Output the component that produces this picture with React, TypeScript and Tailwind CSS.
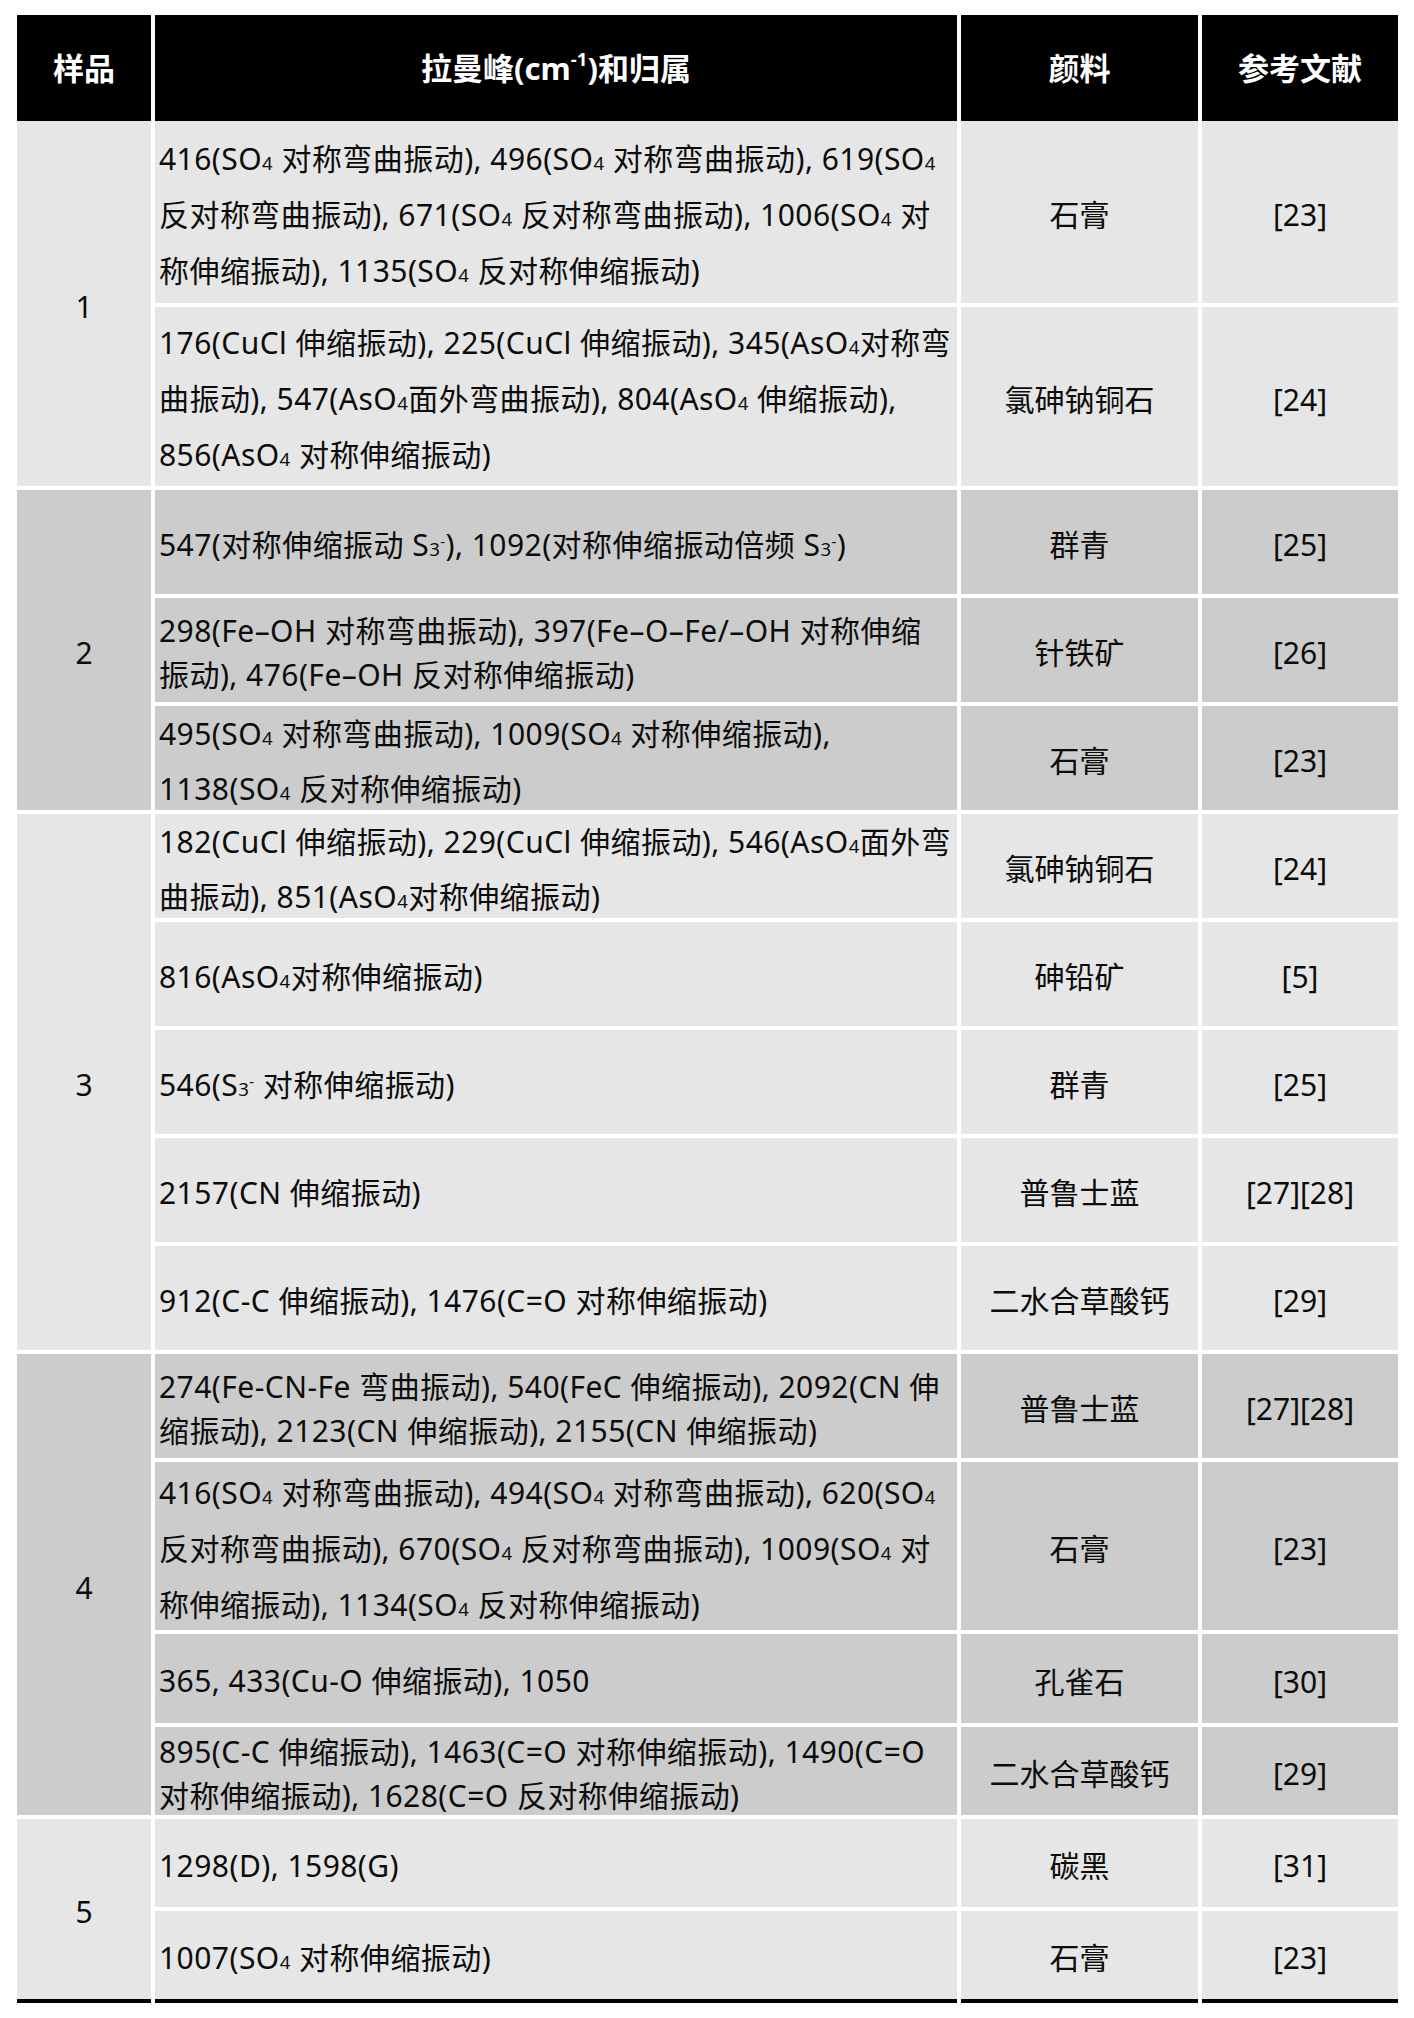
import React, { ReactNode } from "react";

const sub = (t: string) => <span className="text-[0.62em] leading-none">{t}</span>;
const SO4 = (
  <>
    SO{sub("4")}
  </>
);
const AsO4 = (
  <>
    AsO{sub("4")}
  </>
);
const S3 = (
  <>
    S{sub("3")}
    <span className="relative -top-[0.6em] text-[0.5em] leading-none">-</span>
  </>
);

type Row = { h: string; lh: string; lines: ReactNode[]; pig: string; ref: string };
type Group = { n: string; span: string; bg: string; rows: Row[] };

const LIGHT = "bg-[#e6e6e6]";
const DARK = "bg-[#cccccc]";

const groups: Group[] = [
  {
    n: "1",
    span: "row-span-2",
    bg: LIGHT,
    rows: [
      {
        h: "h-[182px]",
        lh: "leading-[56px]",
        lines: [
          <>416({SO4} 对称弯曲振动), 496({SO4} 对称弯曲振动), 619({SO4}</>,
          <>反对称弯曲振动), 671({SO4} 反对称弯曲振动), 1006({SO4} 对</>,
          <>称伸缩振动), 1135({SO4} 反对称伸缩振动)</>,
        ],
        pig: "石膏",
        ref: "[23]",
      },
      {
        h: "h-[179px]",
        lh: "leading-[56px]",
        lines: [
          <>176(CuCl 伸缩振动), 225(CuCl 伸缩振动), 345({AsO4}对称弯</>,
          <>曲振动), 547({AsO4}面外弯曲振动), 804({AsO4} 伸缩振动),</>,
          <>856({AsO4} 对称伸缩振动)</>,
        ],
        pig: "氯砷钠铜石",
        ref: "[24]",
      },
    ],
  },
  {
    n: "2",
    span: "row-span-3",
    bg: DARK,
    rows: [
      {
        h: "h-[104px]",
        lh: "leading-[56px]",
        lines: [<>547(对称伸缩振动 {S3}), 1092(对称伸缩振动倍频 {S3})</>],
        pig: "群青",
        ref: "[25]",
      },
      {
        h: "h-[104px]",
        lh: "leading-[44px]",
        lines: [
          <>298(Fe–OH 对称弯曲振动), 397(Fe–O–Fe/–OH 对称伸缩</>,
          <>振动), 476(Fe–OH 反对称伸缩振动)</>,
        ],
        pig: "针铁矿",
        ref: "[26]",
      },
      {
        h: "h-[104px]",
        lh: "leading-[55px]",
        lines: [
          <>495({SO4} 对称弯曲振动), 1009({SO4} 对称伸缩振动),</>,
          <>1138({SO4} 反对称伸缩振动)</>,
        ],
        pig: "石膏",
        ref: "[23]",
      },
    ],
  },
  {
    n: "3",
    span: "row-span-5",
    bg: LIGHT,
    rows: [
      {
        h: "h-[104px]",
        lh: "leading-[55px]",
        lines: [
          <>182(CuCl 伸缩振动), 229(CuCl 伸缩振动), 546({AsO4}面外弯</>,
          <>曲振动), 851({AsO4}对称伸缩振动)</>,
        ],
        pig: "氯砷钠铜石",
        ref: "[24]",
      },
      {
        h: "h-[104px]",
        lh: "leading-[56px]",
        lines: [<>816({AsO4}对称伸缩振动)</>],
        pig: "砷铅矿",
        ref: "[5]",
      },
      {
        h: "h-[104px]",
        lh: "leading-[56px]",
        lines: [<>546({S3} 对称伸缩振动)</>],
        pig: "群青",
        ref: "[25]",
      },
      {
        h: "h-[104px]",
        lh: "leading-[56px]",
        lines: [<>2157(CN 伸缩振动)</>],
        pig: "普鲁士蓝",
        ref: "[27][28]",
      },
      {
        h: "h-[104px]",
        lh: "leading-[56px]",
        lines: [<>912(C-C 伸缩振动), 1476(C=O 对称伸缩振动)</>],
        pig: "二水合草酸钙",
        ref: "[29]",
      },
    ],
  },
  {
    n: "4",
    span: "row-span-4",
    bg: DARK,
    rows: [
      {
        h: "h-[104px]",
        lh: "leading-[44px]",
        lines: [
          <>274(Fe-CN-Fe 弯曲振动), 540(FeC 伸缩振动), 2092(CN 伸</>,
          <>缩振动), 2123(CN 伸缩振动), 2155(CN 伸缩振动)</>,
        ],
        pig: "普鲁士蓝",
        ref: "[27][28]",
      },
      {
        h: "h-[168px]",
        lh: "leading-[56px]",
        lines: [
          <>416({SO4} 对称弯曲振动), 494({SO4} 对称弯曲振动), 620({SO4}</>,
          <>反对称弯曲振动), 670({SO4} 反对称弯曲振动), 1009({SO4} 对</>,
          <>称伸缩振动), 1134({SO4} 反对称伸缩振动)</>,
        ],
        pig: "石膏",
        ref: "[23]",
      },
      {
        h: "h-[89px]",
        lh: "leading-[56px]",
        lines: [<>365, 433(Cu-O 伸缩振动), 1050</>],
        pig: "孔雀石",
        ref: "[30]",
      },
      {
        h: "h-[88px]",
        lh: "leading-[44px]",
        lines: [
          <>895(C-C 伸缩振动), 1463(C=O 对称伸缩振动), 1490(C=O</>,
          <>对称伸缩振动), 1628(C=O 反对称伸缩振动)</>,
        ],
        pig: "二水合草酸钙",
        ref: "[29]",
      },
    ],
  },
  {
    n: "5",
    span: "row-span-2",
    bg: LIGHT,
    rows: [
      {
        h: "h-[88px]",
        lh: "leading-[56px]",
        lines: [<>1298(D), 1598(G)</>],
        pig: "碳黑",
        ref: "[31]",
      },
      {
        h: "h-[88px]",
        lh: "leading-[56px]",
        lines: [<>1007({SO4} 对称伸缩振动)</>],
        pig: "石膏",
        ref: "[23]",
      },
    ],
  },
];

export default function App() {
  return (
    <div className="min-h-[2018px] bg-white pl-[17px] pt-[15px] font-['Noto_Sans','Noto_Sans_CJK_SC',sans-serif] text-[30px] text-[#0c0c0c]">
      <div className="w-[1381px]">
        <div className="grid h-[106px] grid-cols-[134px_802px_237px_196px] gap-x-1 text-[31px] font-bold text-white">
          <div className="flex items-center justify-center bg-black">样品</div>
          <div className="flex items-center justify-center bg-black">
            拉曼峰(cm
            <span className="relative -top-[0.45em] text-[0.6em] leading-none">-1</span>)和归属
          </div>
          <div className="flex items-center justify-center bg-black">颜料</div>
          <div className="flex items-center justify-center bg-black">参考文献</div>
        </div>
        <div className="grid grid-cols-[134px_802px_237px_196px] gap-1">
          {groups.map((g) => (
            <React.Fragment key={g.n}>
              <div className={`col-start-1 flex items-center justify-center pt-[5px] ${g.span} ${g.bg}`}>{g.n}</div>
              {g.rows.map((r, i) => (
                <React.Fragment key={i}>
                  <div className={`col-start-2 flex items-center pl-[4px] pt-[5px] tracking-[0.45px] ${r.h} ${g.bg}`}>
                    <div className={r.lh}>
                      {r.lines.map((l, j) => (
                        <div key={j} className="whitespace-nowrap">
                          {l}
                        </div>
                      ))}
                    </div>
                  </div>
                  <div className={`col-start-3 flex items-center justify-center pt-[5px] ${g.bg}`}>{r.pig}</div>
                  <div className={`col-start-4 flex items-center justify-center pt-[5px] ${g.bg}`}>{r.ref}</div>
                </React.Fragment>
              ))}
            </React.Fragment>
          ))}
        </div>
        <div className="grid grid-cols-[134px_802px_237px_196px] gap-x-1">
          <div className="h-1 bg-black" />
          <div className="h-1 bg-black" />
          <div className="h-1 bg-black" />
          <div className="h-1 bg-black" />
        </div>
      </div>
    </div>
  );
}
